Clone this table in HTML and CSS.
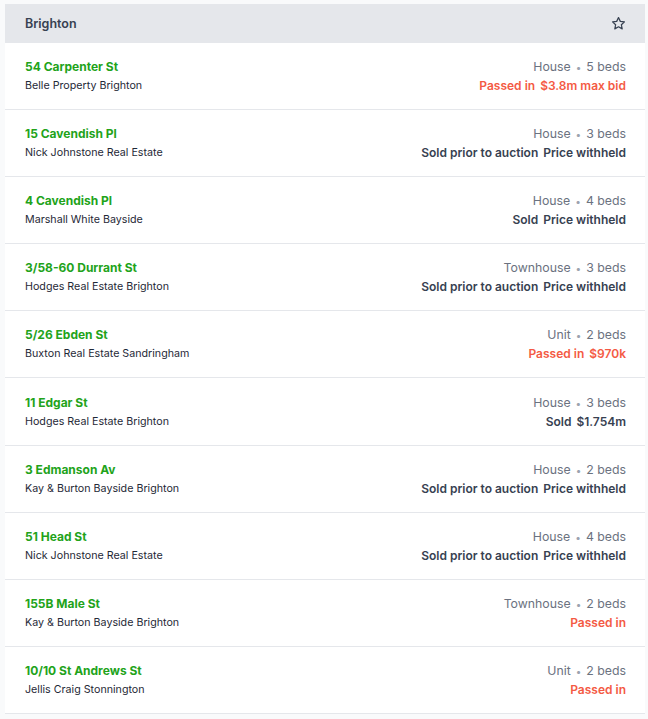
FILE: index.html
```html
<!DOCTYPE html>
<html>
<head>
<meta charset="utf-8">
<link rel="stylesheet" href="styles.css">
</head>
<body>
<div class="card">
  <div class="header">
    <span class="suburb">Brighton</span>
    <svg class="star" width="15" height="15" viewBox="0 0 24 24" fill="none" stroke="#374151" stroke-width="2" stroke-linejoin="round"><path d="M12 2.5l2.9 6.1 6.6.8-4.9 4.6 1.3 6.6L12 17.3l-5.9 3.3 1.3-6.6-4.9-4.6 6.6-.8z"/></svg>
  </div>
  <div class="row">
    <div class="left"><div class="addr">54 Carpenter St</div><div class="agent">Belle Property Brighton</div></div>
    <div class="right"><div class="meta">House<span class="dot">•</span>5 beds</div><div class="result red">Passed in<span class="price">$3.8m max bid</span></div></div>
  </div>
  <div class="row">
    <div class="left"><div class="addr">15 Cavendish Pl</div><div class="agent">Nick Johnstone Real Estate</div></div>
    <div class="right"><div class="meta">House<span class="dot">•</span>3 beds</div><div class="result">Sold prior to auction<span class="price">Price withheld</span></div></div>
  </div>
  <div class="row">
    <div class="left"><div class="addr">4 Cavendish Pl</div><div class="agent">Marshall White Bayside</div></div>
    <div class="right"><div class="meta">House<span class="dot">•</span>4 beds</div><div class="result">Sold<span class="price">Price withheld</span></div></div>
  </div>
  <div class="row">
    <div class="left"><div class="addr">3/58-60 Durrant St</div><div class="agent">Hodges Real Estate Brighton</div></div>
    <div class="right"><div class="meta">Townhouse<span class="dot">•</span>3 beds</div><div class="result">Sold prior to auction<span class="price">Price withheld</span></div></div>
  </div>
  <div class="row">
    <div class="left"><div class="addr">5/26 Ebden St</div><div class="agent">Buxton Real Estate Sandringham</div></div>
    <div class="right"><div class="meta">Unit<span class="dot">•</span>2 beds</div><div class="result red">Passed in<span class="price">$970k</span></div></div>
  </div>
  <div class="row">
    <div class="left"><div class="addr">11 Edgar St</div><div class="agent">Hodges Real Estate Brighton</div></div>
    <div class="right"><div class="meta">House<span class="dot">•</span>3 beds</div><div class="result">Sold<span class="price">$1.754m</span></div></div>
  </div>
  <div class="row">
    <div class="left"><div class="addr">3 Edmanson Av</div><div class="agent">Kay &amp; Burton Bayside Brighton</div></div>
    <div class="right"><div class="meta">House<span class="dot">•</span>2 beds</div><div class="result">Sold prior to auction<span class="price">Price withheld</span></div></div>
  </div>
  <div class="row">
    <div class="left"><div class="addr">51 Head St</div><div class="agent">Nick Johnstone Real Estate</div></div>
    <div class="right"><div class="meta">House<span class="dot">•</span>4 beds</div><div class="result">Sold prior to auction<span class="price">Price withheld</span></div></div>
  </div>
  <div class="row">
    <div class="left"><div class="addr">155B Male St</div><div class="agent">Kay &amp; Burton Bayside Brighton</div></div>
    <div class="right"><div class="meta">Townhouse<span class="dot">•</span>2 beds</div><div class="result red">Passed in</div></div>
  </div>
  <div class="row">
    <div class="left"><div class="addr">10/10 St Andrews St</div><div class="agent">Jellis Craig Stonnington</div></div>
    <div class="right"><div class="meta">Unit<span class="dot">•</span>2 beds</div><div class="result red">Passed in</div></div>
  </div>
</div>
</body>
</html>
```
FILE: styles.css
```css
html, body {
  margin: 0;
  padding: 0;
  background: #f9fafb;
}
body {
  padding: 4px 3px 0 5px;
  font-family: Inter, "Noto Sans", sans-serif;
}
.card {
  background: #ffffff;
}
.header {
  display: flex;
  justify-content: space-between;
  align-items: center;
  background: #e5e7eb;
  height: 39px;
  padding: 0 19px 0 20px;
  box-sizing: border-box;
}
.suburb {
  font-size: 12.5px;
  font-weight: 600;
  color: #374151;
}
.star {
  display: block;
}
.row {
  display: flex;
  justify-content: space-between;
  padding: 14.05px 19px 14.05px 20px;
  border-bottom: 1px solid #e5e7eb;
}
.addr, .agent, .meta, .result {
  height: 19px;
  line-height: 19px;
  white-space: nowrap;
}
.addr {
  font-size: 12px;
  font-weight: 650;
  color: #22a31a;
}
.agent {
  font-size: 10.7px;
  color: #1f2937;
}
.right {
  text-align: right;
}
.meta {
  font-size: 12.3px;
  color: #6b7280;
}
.dot {
  color: #9ca3af;
  font-size: 10px;
  line-height: 0;
  margin: 0 5px;
}
.result {
  font-size: 12px;
  font-weight: 600;
  color: #374151;
}
.result.red {
  color: #f45a44;
}
.price {
  margin-left: 5px;
}
```
